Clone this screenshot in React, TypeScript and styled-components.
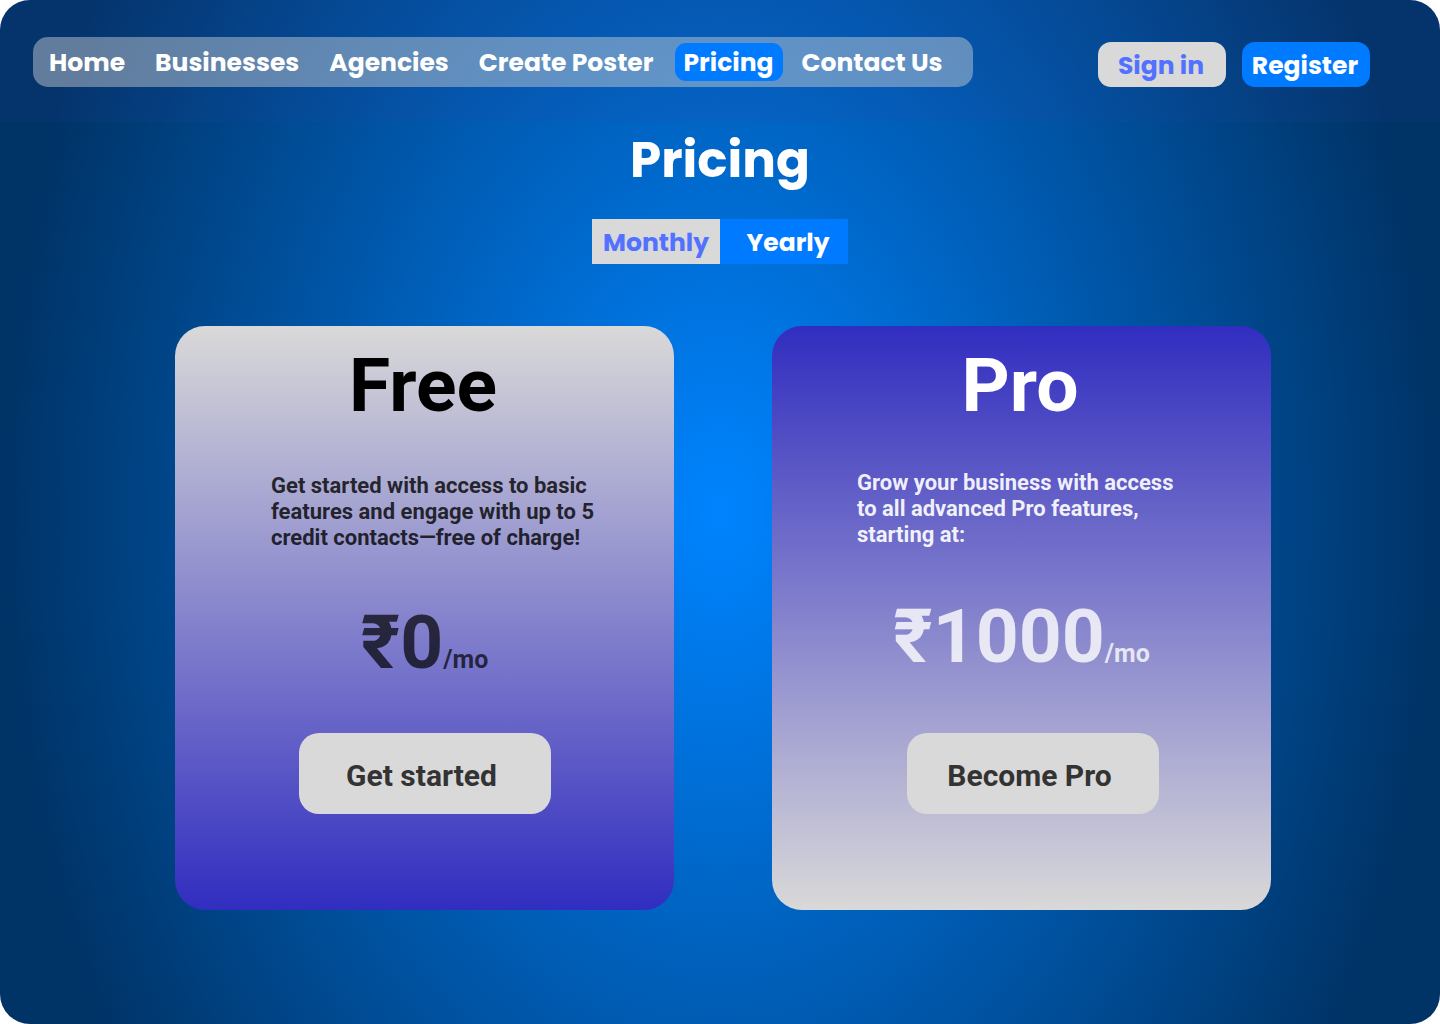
import React, { useState } from "react";
import styled, { createGlobalStyle } from "styled-components";

const display = `Poppins, Inter, "Open Sans", sans-serif`;
const body = `Roboto, "Noto Sans", sans-serif`;

const GlobalStyle = createGlobalStyle`
  *, *::before, *::after { box-sizing: border-box; }
  body { margin: 0; background: #ffffff; font-family: ${body}; }
  h1, h2, p, ul { margin: 0; padding: 0; }
  button { border: 0; padding: 0; font: inherit; cursor: pointer; }
`;

const Page = styled.div`
  min-height: 100vh;
  border-radius: 30px;
  overflow: hidden;
  background: radial-gradient(ellipse 50% 100% at 50% 50%, #0084ff 0%, #003366 100%);
`;

const Header = styled.header`
  display: flex;
  justify-content: space-between;
  align-items: flex-start;
  height: 122px;
  padding: 37px 70px 0 33px;
  background: rgba(47, 72, 178, 0.1);
`;

const NavList = styled.ul`
  display: flex;
  align-items: center;
  gap: 14px;
  width: 940px;
  height: 50px;
  padding: 0 8px;
  border-radius: 15px;
  background: rgba(217, 217, 217, 0.44);
  list-style: none;
`;

const NavLink = styled.a<{ $active?: boolean }>`
  display: block;
  margin-right: ${(p) => (p.$active ? "-4px" : "0")};
  padding: ${(p) => (p.$active ? "2px 10px 0 8px" : "2px 8px 0")};
  border-radius: 11px;
  background: ${(p) => (p.$active ? "#007aff" : "transparent")};
  color: #ffffff;
  font: 700 25px/36px ${display};
  text-decoration: none;
  white-space: nowrap;
`;

const AuthActions = styled.div`
  display: flex;
  gap: 16px;
  padding-top: 5px;
`;

const AuthButton = styled.button<{ $primary?: boolean }>`
  width: 128px;
  height: 45px;
  padding: 2px 2px 0 0;
  border-radius: 13px;
  background: ${(p) => (p.$primary ? "#007aff" : "#d9d9d9")};
  color: ${(p) => (p.$primary ? "#ffffff" : "#5271ff")};
  font: 700 25px/43px ${display};
`;

const Main = styled.main`
  display: flex;
  flex-direction: column;
  align-items: center;
  padding-bottom: 114px;
`;

const Title = styled.h1`
  color: #ffffff;
  font: 700 50px/75px ${display};
`;

const Toggle = styled.div`
  display: flex;
  margin-top: 22px;
`;

const ToggleButton = styled.button<{ $selected: boolean }>`
  width: 128px;
  height: 45px;
  padding-top: 2px;
  background: ${(p) => (p.$selected ? "#d9d9d9" : "#007aff")};
  color: ${(p) => (p.$selected ? "#5271ff" : "#ffffff")};
  font: 700 25px/43px ${display};

  & + & {
    padding-left: 8px;
  }
`;

const Plans = styled.div`
  display: flex;
  flex-wrap: wrap;
  justify-content: center;
  gap: 98px;
  margin-top: 62px;
  padding-left: 6px;
`;

const Card = styled.section<{ $pro?: boolean }>`
  display: flex;
  flex-direction: column;
  align-items: center;
  width: 499px;
  min-height: 584px;
  padding: 15px 0 96px;
  border-radius: 30px;
  background: linear-gradient(
    ${(p) => (p.$pro ? "#312dc0, #d9d9d9" : "#d9d9d9, #312dc0")}
  );
  color: ${(p) => (p.$pro ? "#ffffff" : "#000000")};
`;

const PlanName = styled.h2`
  padding-right: 3px;
  font: 700 75px/88px ${body};
`;

const Description = styled.p<{ $pro?: boolean }>`
  align-self: flex-start;
  width: ${(p) => (p.$pro ? "421px" : "428px")};
  margin-top: ${(p) => (p.$pro ? "41px" : "44px")};
  padding-left: ${(p) => (p.$pro ? "85px" : "96px")};
  color: ${(p) => (p.$pro ? "rgba(255, 255, 255, 0.92)" : "rgba(0, 0, 0, 0.8)")};
  font: 700 22px/26px ${body};
`;

const Price = styled.p<{ $pro?: boolean }>`
  margin-top: ${(p) => (p.$pro ? "44px" : "47px")};
  color: ${(p) => (p.$pro ? "rgba(255, 255, 255, 0.8)" : "rgba(0, 0, 0, 0.7)")};
  font: 700 75px/88px ${body};
`;

const Period = styled.span`
  font-size: 25px;
`;

const Action = styled.div<{ $pro?: boolean }>`
  margin-top: auto;
  padding-left: ${(p) => (p.$pro ? "22px" : "0")};
`;

const ActionButton = styled.button`
  width: 252px;
  height: 81px;
  padding: 4px 6px 0 0;
  border-radius: 20px;
  background: #d9d9d9;
  color: #333333;
  font: 700 30px/35px ${body};
`;

const links = ["Home", "Businesses", "Agencies", "Create Poster", "Pricing", "Contact Us"];

const plans = [
  {
    name: "Free",
    text: "Get started with access to basic features and engage with up to 5 credit contacts—free of charge!",
    price: "₹0",
    action: "Get started",
    pro: false,
  },
  {
    name: "Pro",
    text: "Grow your business with access to all advanced Pro features, starting at:",
    price: "₹1000",
    action: "Become Pro",
    pro: true,
  },
];

export default function App() {
  const [period, setPeriod] = useState("Monthly");
  return (
    <>
      <GlobalStyle />
      <Page>
        <Header>
          <nav aria-label="Main">
            <NavList>
              {links.map((l) => (
                <li key={l}>
                  <NavLink href="#" $active={l === "Pricing"}>
                    {l}
                  </NavLink>
                </li>
              ))}
            </NavList>
          </nav>
          <AuthActions>
            <AuthButton type="button">Sign in</AuthButton>
            <AuthButton type="button" $primary>
              Register
            </AuthButton>
          </AuthActions>
        </Header>
        <Main>
          <Title>Pricing</Title>
          <Toggle>
            {["Monthly", "Yearly"].map((p) => (
              <ToggleButton
                key={p}
                type="button"
                $selected={p === period}
                aria-pressed={p === period}
                onClick={() => setPeriod(p)}
              >
                {p}
              </ToggleButton>
            ))}
          </Toggle>
          <Plans>
            {plans.map((p) => (
              <Card key={p.name} $pro={p.pro}>
                <PlanName>{p.name}</PlanName>
                <Description $pro={p.pro}>{p.text}</Description>
                <Price $pro={p.pro}>
                  {p.price}
                  <Period>/mo</Period>
                </Price>
                <Action $pro={p.pro}>
                  <ActionButton type="button">{p.action}</ActionButton>
                </Action>
              </Card>
            ))}
          </Plans>
        </Main>
      </Page>
    </>
  );
}
